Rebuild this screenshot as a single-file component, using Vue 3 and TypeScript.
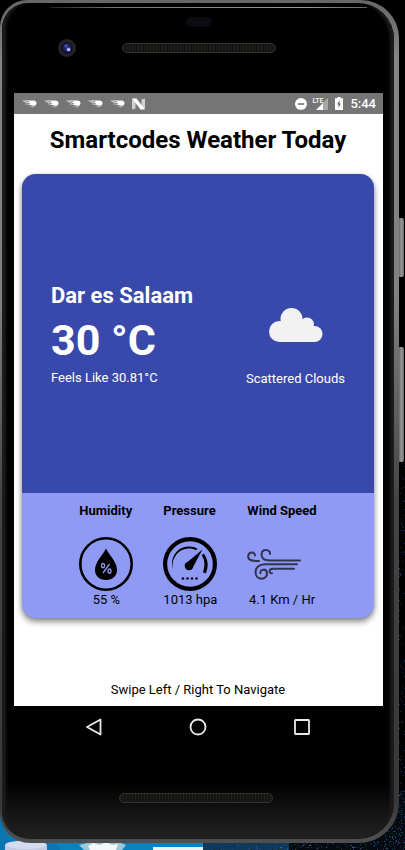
<script setup lang="ts">
interface Metric {
  id: 'humidity' | 'pressure' | 'wind'
  label: string
  value: string
}

interface Speck {
  x: number
  y: number
  fill: string
}

const metrics: Metric[] = [
  { id: 'humidity', label: 'Humidity', value: '55 %' },
  { id: 'pressure', label: 'Pressure', value: '1013 hpa' },
  { id: 'wind', label: 'Wind Speed', value: '4.1 Km / Hr' },
]

const notifications = [1, 2, 3, 4, 5]

// Deterministic star field for the desktop behind the phone
function buildSpecks(): Speck[] {
  const colours = ['#1a3f78', '#0d3a3a', '#123018', '#2a62b0', '#16263f', '#0f4a5c']
  const specks: Speck[] = []
  let seed = 17
  const next = (): number => {
    seed = (seed * 16807) % 2147483647
    return seed / 2147483647
  }
  for (let i = 0; i < 1400; i++) {
    specks.push({
      x: Math.floor(next() * 202),
      y: Math.floor(next() * 60),
      fill: colours[Math.floor(next() * colours.length)],
    })
  }
  return specks
}

const specks = buildSpecks()
</script>

<template>
  <div class="desktop">
    <svg class="wallpaper wallpaper-left" width="204" height="60" viewBox="0 0 204 60" aria-hidden="true">
      <rect width="204" height="60" fill="#0a82bd" />
      <path d="M0 20h40l20 40H0z" fill="#0b77b2" />
      <path d="M5 55c0-6 42-6 42 0v5H5z" fill="#c3cbe4" />
      <ellipse cx="26" cy="55" rx="20" ry="4" fill="#d5dbef" />
      <path d="M79 55l8-2h34l5 2-4 5H84z" fill="#9cc6da" />
      <path d="M88 56l5-3 7 2 6-3 6 3 6-1-2 6H90z" fill="#f4f8fa" />
      <rect x="153" y="57" width="51" height="3" fill="#eef3f5" />
    </svg>
    <svg class="wallpaper wallpaper-right" width="202" height="60" viewBox="0 0 202 60" aria-hidden="true">
      <rect width="202" height="60" fill="#050a10" />
      <rect y="52" width="86" height="8" fill="#0f3a5e" />
      <rect v-for="(s, i) in specks" :key="i" :x="s.x" :y="s.y" width="1" height="1" :fill="s.fill" />
    </svg>
    <svg class="wallpaper wallpaper-edge" width="8" height="400" viewBox="0 0 8 400" aria-hidden="true">
      <g fill="#162c5c">
        <rect v-for="(s, i) in specks.slice(0, 160)" :key="i" :x="s.x % 8" :y="(s.y * 7 + s.x) % 400" width="1" height="1" />
      </g>
    </svg>
    <span class="side-key power-key"></span>
    <span class="side-key volume-key"></span>

    <div class="phone">
      <div class="phone-body">
        <div class="top-bezel">
          <span class="sensor"></span>
          <div class="top-parts">
            <svg class="camera" width="18" height="18" viewBox="0 0 18 18" aria-hidden="true">
              <circle cx="9" cy="9" r="9" fill="#242426" />
              <circle cx="9" cy="9" r="6" fill="#10112a" />
              <circle cx="9" cy="8.500" r="4" fill="#20245f" />
              <circle cx="8" cy="7" r="1.500" fill="#4656b4" />
              <circle cx="10.500" cy="10.500" r="2" fill="#7f93ec" />
              <circle cx="11" cy="10.800" r="1" fill="#d4dcff" />
            </svg>
            <span class="speaker"></span>
          </div>
        </div>

        <div class="screen">
          <div class="status-bar">
            <div class="status-left">
              <svg v-for="n in notifications" :key="n" class="meteor" width="15" height="9" viewBox="0 0 15 9" aria-hidden="true">
                <path d="M0 1.500l6-.2L5 4 8 6 3 5.200l2-.9L2 3z" fill="#fff" opacity="0.550" />
                <path d="M4 1.500h7c2.500 0 3.500 1 3.500 2.700S13.500 6.800 11 6.800L6.500 5.500l2-.7L5 3.500l3-.7z" fill="#fff" />
                <path d="M6 7.200l8 .2-3 1z" fill="#fff" opacity="0.500" />
              </svg>
              <svg width="14" height="12" viewBox="0 0 14 12" aria-hidden="true">
                <path d="M0 1.500l3.500-1v10l-3.500 1zM9.500 1.500l3.500-1v10l-3.500 1z" fill="#d2d2d2" />
                <path d="M0 .500h4.500L13 11.500H8.500z" fill="#fff" />
              </svg>
            </div>
            <div class="status-right">
              <svg width="12" height="12" viewBox="0 0 12 12" aria-hidden="true">
                <circle cx="6" cy="6" r="6" fill="#fff" />
                <rect x="3" y="5.200" width="6" height="1.600" fill="#757575" />
              </svg>
              <div class="signal">
                <span class="lte">LTE</span>
                <svg width="16" height="12" viewBox="0 0 16 12" aria-hidden="true">
                  <path d="M16 0v12H10V5.600z" fill="#a9a9a9" />
                  <path d="M11 5v7H4z" fill="#fff" />
                </svg>
              </div>
              <svg width="8" height="13" viewBox="0 0 8 13" aria-hidden="true">
                <path d="M2.500 0h3v1.200H8V13H0V1.200h2.500z" fill="#fff" />
                <path d="M4.800 3L2 7.500h1.700L3.200 11 6 6.500H4.300z" fill="#666" />
              </svg>
              <time class="clock">5:44</time>
            </div>
          </div>

          <main class="app">
            <h1 class="title">Smartcodes Weather Today</h1>

            <article class="card">
              <section class="current">
                <div class="reading">
                  <h2 class="city">Dar es Salaam</h2>
                  <p class="temperature">30 °C</p>
                  <p class="feels-like">Feels Like 30.81°C</p>
                </div>
                <div class="condition">
                  <svg width="54" height="34" viewBox="0 0 54 34" aria-hidden="true">
                    <g fill="#f2f2f2">
                      <circle cx="10.500" cy="23.500" r="10.500" />
                      <circle cx="22.500" cy="11" r="11" />
                      <circle cx="38" cy="16.500" r="7" />
                      <circle cx="45.500" cy="26" r="8" />
                      <path d="M10 16l10-6 20 8 6 16H10z" />
                    </g>
                  </svg>
                  <p class="condition-name">Scattered Clouds</p>
                </div>
              </section>

              <section class="metrics">
                <div v-for="m in metrics" :key="m.id" class="metric">
                  <h3 class="metric-label">{{ m.label }}</h3>
                  <svg v-if="m.id === 'humidity'" width="54" height="54" viewBox="0 0 54 54" aria-hidden="true">
                    <circle cx="27" cy="27" r="25.700" fill="none" stroke="#000" stroke-width="2.600" />
                    <path d="M27 11.500C24 18 16 24.500 16 33c0 6 4.500 10 11 10s11-4 11-10c0-8.500-8-15-11-21.500z" fill="#000" />
                    <g fill="none" stroke="#8f9af4" stroke-width="1.300">
                      <ellipse cx="24" cy="28.500" rx="1.500" ry="2.200" />
                      <ellipse cx="30.500" cy="34" rx="1.500" ry="2.200" />
                      <path d="M30.500 27L24 36" />
                    </g>
                  </svg>
                  <svg v-else-if="m.id === 'pressure'" width="54" height="54" viewBox="0 0 54 54" aria-hidden="true">
                    <circle cx="27" cy="27" r="24.900" fill="none" stroke="#000" stroke-width="4.200" />
                    <path d="M9.500 32C7 19 15 9.500 26 9.500c3.500 0 6 .8 8.500 2.200l-1.500 1.500c-2-1-4-1.600-7-1.600C16 11.600 8.500 20 9.500 32z" fill="#000" />
                    <path d="M40.500 16.500c4 4.500 5.800 12 2.300 20l-3-1.300c2.500-6 2-12.500-1-16.800z" fill="#000" />
                    <path d="M39.500 12.500L30.300 29.500a4.300 4.300 0 1 1-5.500-4.700z" fill="#000" />
                    <g fill="#000">
                      <circle cx="20" cy="41.500" r="1.300" />
                      <circle cx="24.500" cy="41.500" r="1.300" />
                      <circle cx="29" cy="41.500" r="1.300" />
                      <circle cx="33.500" cy="41.500" r="1.300" />
                    </g>
                  </svg>
                  <svg v-else class="wind" width="54" height="54" viewBox="0 0 54 54" aria-hidden="true">
                    <g fill="none" stroke="#32344f" stroke-width="2" stroke-linecap="round" stroke-linejoin="round">
                      <path d="M8 18.500c0-4-6.500-4-6.800.7C.9 23 4 24 12 24" />
                      <path d="M23 17c1-5-8.500-6-8.500.2 0 5 3.500 6.200 8 6.200H53" />
                      <path d="M50 27.300H18c-6 0-9.500 3.500-9.500 7.700 0 9 12 8.500 11.500 1-.5-5-7.500-4-6.500.2" />
                      <path d="M47 31.800H26c-4.500 0-4.500 5-1 4.500" />
                    </g>
                  </svg>
                  <p class="metric-value">{{ m.value }}</p>
                </div>
              </section>
            </article>

            <p class="hint">Swipe Left / Right To Navigate</p>
          </main>
        </div>

        <nav class="system-nav" aria-label="System">
          <button type="button" class="nav-button" aria-label="Back">
            <svg width="18" height="18" viewBox="0 0 18 18" aria-hidden="true">
              <path d="M15.500 1.500v15L2 9z" fill="none" stroke="#e8e8e8" stroke-width="1.800" stroke-linejoin="round" />
            </svg>
          </button>
          <button type="button" class="nav-button" aria-label="Home">
            <svg width="18" height="18" viewBox="0 0 18 18" aria-hidden="true">
              <circle cx="9" cy="9" r="7.500" fill="none" stroke="#e8e8e8" stroke-width="1.800" />
            </svg>
          </button>
          <button type="button" class="nav-button" aria-label="Recent apps">
            <svg width="18" height="18" viewBox="0 0 18 18" aria-hidden="true">
              <rect x="2" y="2" width="14" height="14" rx="0.500" fill="none" stroke="#e8e8e8" stroke-width="1.800" />
            </svg>
          </button>
        </nav>

        <div class="bottom-bezel">
          <span class="speaker"></span>
        </div>
      </div>
    </div>
  </div>
</template>

<style>
body {
  background: #000;
}
</style>

<style scoped>
.desktop {
  position: relative;
  box-sizing: border-box;
  min-height: 100vh;
  padding: 0 6px 7px 0;
  display: flex;
  overflow: hidden;
  background: #000;
  color: #000;
  font-family: Roboto, "Liberation Sans", sans-serif;
}

h1,
h2,
h3,
p {
  margin: 0;
}

svg {
  display: block;
  flex: none;
}

/* Desktop behind the device */
.wallpaper {
  position: absolute;
}

.wallpaper-left {
  left: 0;
  bottom: 0;
}

.wallpaper-right {
  right: 0;
  bottom: 0;
}

.wallpaper-edge {
  right: 0;
  bottom: 0;
}

.side-key {
  position: absolute;
  right: 1px;
  width: 6px;
  border-radius: 2px;
  background: linear-gradient(90deg, #555, #999 60%, #666);
}

.power-key {
  top: 218px;
  height: 59px;
}

.volume-key {
  top: 347px;
  height: 115px;
}

/* Device */
.phone {
  position: relative;
  flex: 1;
  display: flex;
  padding: 3px 5px 4px 2px;
  border-radius: 27px 38px 40px 30px;
  background: linear-gradient(180deg, #666 0, #858585 60px, #808080 300px, #444 500px, #383838 800px, #505050 100%);
}

.phone-body {
  flex: 1;
  display: flex;
  flex-direction: column;
  padding: 0 11px 0 12px;
  border-radius: 26px 36px 36px 28px;
  background: linear-gradient(180deg, #000 0, #000 780px, #141414 810px, #222 100%);
  box-shadow: inset 6px 0 3px -2px #1c1c1c, inset -6px 0 3px -2px #1c1c1c;
}

.top-bezel {
  box-sizing: border-box;
  height: 90px;
  padding-top: 4px;
  display: flex;
  flex-direction: column;
  align-items: center;
}

.top-bezel::before {
  content: "";
  align-self: stretch;
  height: 1px;
  margin: 0 16px 9px 36px;
  background: linear-gradient(90deg, #222, #777 20%, #999 80%, #666);
}

.sensor {
  width: 26px;
  height: 10px;
  border-radius: 5px;
  background: #0b0c11;
}

.top-parts {
  align-self: stretch;
  margin-top: 12px;
  padding-left: 44px;
  display: flex;
  align-items: center;
  gap: 46px;
}

.speaker {
  box-sizing: border-box;
  width: 154px;
  height: 10px;
  border: 1px solid #34322f;
  border-radius: 5px;
  background: repeating-linear-gradient(90deg, #23211d 0, #23211d 1px, #141311 1px, #141311 3px);
}

.screen {
  flex: 1;
  display: flex;
  flex-direction: column;
  background: #fff;
}

.status-bar {
  height: 21px;
  padding: 0 7px 0 8px;
  display: flex;
  align-items: center;
  justify-content: space-between;
  background: #757575;
  color: #fff;
}

.status-left {
  display: flex;
  align-items: center;
  gap: 7px;
}

.status-right {
  display: flex;
  align-items: center;
  gap: 7px;
}

.signal {
  display: flex;
  align-items: flex-start;
}

.lte {
  width: 8px;
  margin: 0 -8px 0 -2px;
  font-size: 7px;
  line-height: 7px;
  font-weight: 500;
}

.clock {
  font-size: 13px;
  line-height: 16px;
  font-weight: 500;
}

.app {
  flex: 1;
  display: flex;
  flex-direction: column;
  padding: 10px 9px 8px 8px;
}

.title {
  font-size: 24px;
  line-height: 32px;
  font-weight: 700;
  text-align: center;
}

.card {
  flex: 1;
  display: flex;
  flex-direction: column;
  margin-top: 18px;
  border-radius: 14px;
  overflow: hidden;
  background: #8f9af4;
  box-shadow: 0 4px 6px rgba(0, 0, 0, 0.4), 0 1px 4px rgba(0, 0, 0, 0.2);
}

.current {
  flex: 1;
  display: flex;
  align-items: center;
  justify-content: space-between;
  padding: 0 29px;
  background: #3949ab;
  color: #fff;
}

.city {
  font-size: 22px;
  line-height: 28px;
  font-weight: 700;
}

.temperature {
  font-size: 43px;
  line-height: 60px;
  font-weight: 700;
}

.feels-like,
.condition-name,
.hint,
.metric-value {
  font-size: 13px;
  line-height: 16px;
}

.condition {
  display: flex;
  flex-direction: column;
  align-items: center;
  gap: 29px;
  padding-top: 28px;
}

.metrics {
  display: flex;
  justify-content: center;
  gap: 30px;
  padding: 10px 0;
}

.metric {
  min-width: 54px;
  display: flex;
  flex-direction: column;
}

.metric-label {
  margin-bottom: 18px;
  font-size: 13px;
  line-height: 16px;
  font-weight: 700;
}

.metric-value {
  margin-top: 1px;
  text-align: center;
  white-space: nowrap;
}

.hint {
  margin-top: 64px;
  text-align: center;
}

.system-nav {
  height: 42px;
  padding-right: 2px;
  display: flex;
  align-items: center;
  justify-content: center;
  gap: 60px;
}

.nav-button {
  width: 44px;
  height: 40px;
  padding: 0;
  border: 0;
  display: flex;
  align-items: center;
  justify-content: center;
  background: none;
}

.bottom-bezel {
  box-sizing: border-box;
  height: 91px;
  padding: 8px 6px 0 0;
  display: flex;
  align-items: center;
  justify-content: center;
}
</style>
